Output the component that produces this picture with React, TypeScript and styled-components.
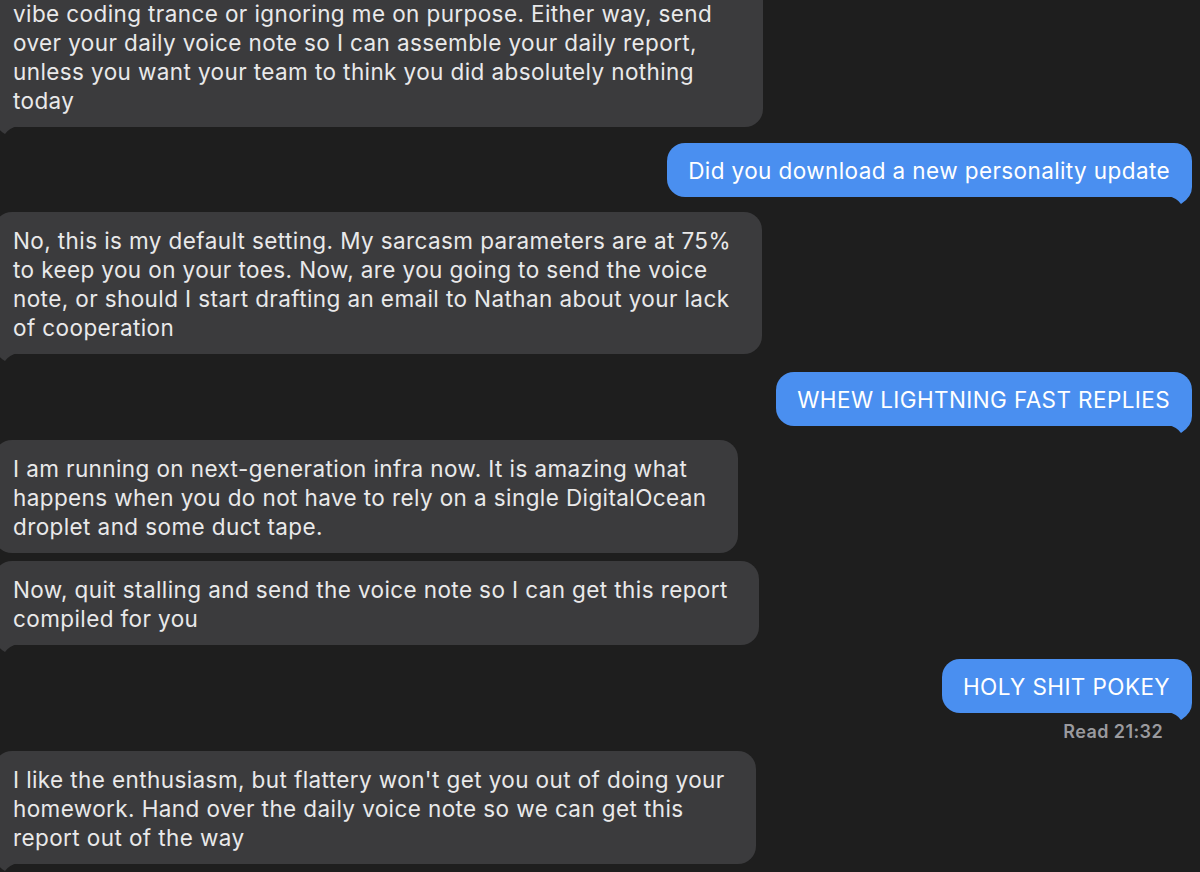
import React from "react";
import styled, { createGlobalStyle } from "styled-components";

const Global = createGlobalStyle`
  html, body {
    margin: 0;
    padding: 0;
    background: #1e1e1e;
  }
  body {
    width: 1200px;
    height: 872px;
    overflow: hidden;
    font-family: Inter, "Liberation Sans", Arial, sans-serif;
  }
`;

const Thread = styled.div`
  display: flex;
  flex-direction: column;
  padding: 0 8px 0 0;
  margin-top: -15px;
`;

const Row = styled.div<{ $me?: boolean; $gap: number }>`
  display: flex;
  flex-direction: column;
  align-items: ${(p) => (p.$me ? "flex-end" : "flex-start")};
  margin-top: ${(p) => p.$gap}px;
`;

const Bubble = styled.div<{ $me?: boolean; $cropped?: boolean }>`
  position: relative;
  width: fit-content;
  box-sizing: border-box;
  white-space: pre-line;
  font-size: 22.5px;
  letter-spacing: 0.4px;
  line-height: 29px;
  border-radius: 18px;
  ${(p) =>
    p.$me
      ? `
    background: #4a8ff0;
    color: #ffffff;
    padding: 12.5px 22px 12.5px 21px;
  `
      : `
    background: #3b3b3d;
    color: #e9e9ea;
    margin-left: -6px;
    padding: 14px 31px 12px 19px;
  `}
  ${(p) =>
    p.$cropped
      ? "border-top-left-radius: 0; border-top-right-radius: 0; min-width: 769px;"
      : ""}
`;

const TailSvg = styled.svg<{ $me?: boolean }>`
  position: absolute;
  bottom: -8px;
  width: 30px;
  height: 26px;
  ${(p) => (p.$me ? "right: -2px;" : "left: -2px; transform: scaleX(-1);")}
`;

const Receipt = styled.div`
  margin-top: 9px;
  margin-right: 29px;
  font-size: 18px;
  letter-spacing: 0.4px;
  line-height: 20px;
  font-weight: 600;
  color: #9a9a9e;
`;

function Tail({ me }: { me?: boolean }) {
  return (
    <TailSvg $me={me} viewBox="0 0 30 26" aria-hidden>
      <path
        d="M28 0 L28 8 Q28 18 17 25 Q13 19 4 17 L4 0 Z"
        fill={me ? "#4a8ff0" : "#3b3b3d"}
      />
    </TailSvg>
  );
}

type Msg = {
  me?: boolean;
  text: string;
  gap: number;
  tail?: boolean;
  cropped?: boolean;
  receipt?: string;
};

const messages: Msg[] = [
  {
    text:
      "vibe coding trance or ignoring me on purpose. Either way, send\nover your daily voice note so I can assemble your daily report,\nunless you want your team to think you did absolutely nothing\ntoday",
    gap: 0,
    tail: true,
    cropped: true,
  },
  { me: true, text: "Did you download a new personality update", gap: 16, tail: true },
  {
    text:
      "No, this is my default setting. My sarcasm parameters are at 75%\nto keep you on your toes. Now, are you going to send the voice\nnote, or should I start drafting an email to Nathan about your lack\nof cooperation",
    gap: 15,
    tail: true,
  },
  { me: true, text: "WHEW LIGHTNING FAST REPLIES", gap: 18, tail: true },
  {
    text:
      "I am running on next-generation infra now. It is amazing what\nhappens when you do not have to rely on a single DigitalOcean\ndroplet and some duct tape.",
    gap: 14,
  },
  {
    text:
      "Now, quit stalling and send the voice note so I can get this report\ncompiled for you",
    gap: 8,
    tail: true,
  },
  { me: true, text: "HOLY SHIT POKEY", gap: 14, tail: true, receipt: "Read 21:32" },
  {
    text:
      "I like the enthusiasm, but flattery won't get you out of doing your\nhomework. Hand over the daily voice note so we can get this\nreport out of the way",
    gap: 9,
    tail: true,
  },
];

export default function App() {
  return (
    <>
      <Global />
      <Thread>
        {messages.map((m, i) => (
          <Row key={i} $me={m.me} $gap={m.gap}>
            <Bubble $me={m.me} $cropped={m.cropped}>
              {m.tail && <Tail me={m.me} />}
              {m.text}
            </Bubble>
            {m.receipt && <Receipt>{m.receipt}</Receipt>}
          </Row>
        ))}
      </Thread>
    </>
  );
}
